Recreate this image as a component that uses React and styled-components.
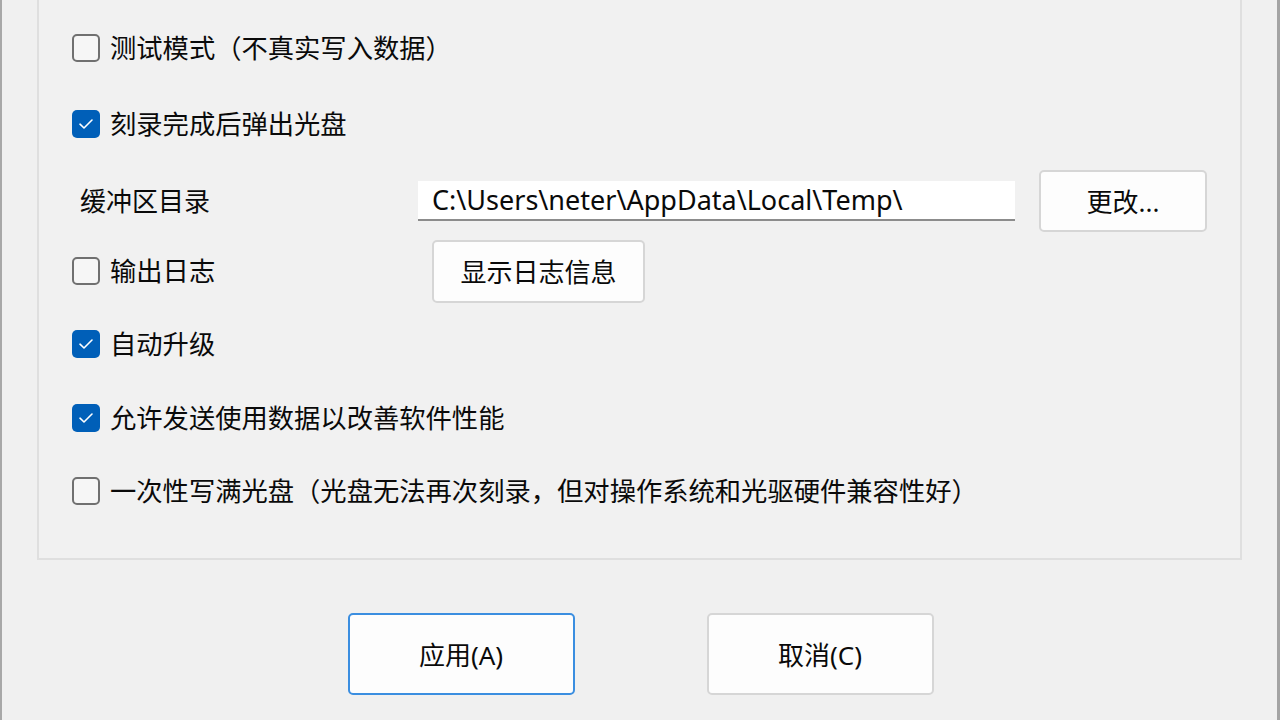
import React, { useState } from "react";
import styled, { createGlobalStyle } from "styled-components";

const GlobalStyle = createGlobalStyle`
  html, body {
    margin: 0;
    padding: 0;
    background: #f0f0f0;
  }
  body {
    font-family: "Noto Sans", "Noto Sans CJK SC", sans-serif;
    color: #0a0a0a;
  }
`;

const Window = styled.div`
  box-sizing: border-box;
  width: 1280px;
  height: 720px;
  overflow: hidden;
  background: #f0f0f0;
  border-left: 2px solid #a8a8a8;
  border-right: 3px solid #a4a4a4;
  display: flex;
  flex-direction: column;
`;

const GroupBox = styled.div`
  box-sizing: border-box;
  margin: 0 35px 0 35px;
  height: 560px;
  border: 2px solid #dfdfdf;
  border-top: none;
  background: #f1f1f1;
  padding: 11px 0 0 33px;
  display: grid;
  grid-template-columns: 346px 1fr;
  grid-template-rows: 74px 78px 76px 64px 82px 66px 80px;
`;

const Cell = styled.div`
  display: flex;
  align-items: center;
  grid-column: ${(p) => (p.$span ? "1 / span 2" : "auto")};
  padding-left: ${(p) => p.$indent || 0}px;
`;

const CheckLabel = styled.label`
  display: flex;
  align-items: center;
  gap: 10px;
  font-size: 26.3px;
  line-height: 30px;
  white-space: nowrap;
  cursor: default;
  user-select: none;
`;

const Box = styled.span`
  box-sizing: border-box;
  width: 28px;
  height: 28px;
  border-radius: 5px;
  flex: none;
  display: flex;
  align-items: center;
  justify-content: center;
  background: ${(p) => (p.$checked ? "#005fb8" : "#f6f6f6")};
  border: ${(p) => (p.$checked ? "none" : "2px solid #707070")};
`;

const Label = styled.span`
  font-size: 26px;
  line-height: 30px;
  white-space: nowrap;
`;

const PathInput = styled.input`
  box-sizing: border-box;
  width: 597px;
  height: 40px;
  border: none;
  border-bottom: 2px solid #8c8c8c;
  background: #ffffff;
  padding: 0 0 2px 14px;
  font-family: "Noto Sans", "Noto Sans CJK SC", sans-serif;
  font-size: 27px;
  color: #0a0a0a;
  outline: none;
`;

const Button = styled.button`
  box-sizing: border-box;
  width: ${(p) => p.$w}px;
  height: ${(p) => p.$h}px;
  margin-left: ${(p) => p.$ml || 0}px;
  background: #fdfdfd;
  border: 2px solid ${(p) => (p.$primary ? "#3b8ee0" : "#d6d6d6")};
  border-radius: 5px;
  font-family: "Noto Sans", "Noto Sans CJK SC", sans-serif;
  font-size: 26px;
  color: #0a0a0a;
  padding: 0;
  cursor: default;
`;

const Footer = styled.div`
  display: flex;
  justify-content: center;
  gap: 132px;
  padding-top: 53px;
  padding-left: 2px;
`;

const Check = () => (
  <svg width="16" height="12" viewBox="0 0 16 12">
    <path d="M2 6.2 L6 10 L14 2" fill="none" stroke="#fff" strokeWidth="1.6" strokeLinecap="round" strokeLinejoin="round" />
  </svg>
);

const CheckItem = ({ label, checked, onToggle }) => (
  <CheckLabel onClick={onToggle}>
    <Box $checked={checked}>{checked && <Check />}</Box>
    {label}
  </CheckLabel>
);

export default function App() {
  const [opts, setOpts] = useState({
    test: false,
    eject: true,
    log: false,
    update: true,
    stats: true,
    fill: false,
  });
  const toggle = (k) => () => setOpts({ ...opts, [k]: !opts[k] });

  return (
    <>
      <GlobalStyle />
      <Window>
        <GroupBox>
          <Cell $span>
            <CheckItem label="测试模式（不真实写入数据）" checked={opts.test} onToggle={toggle("test")} />
          </Cell>
          <Cell $span>
            <CheckItem label="刻录完成后弹出光盘" checked={opts.eject} onToggle={toggle("eject")} />
          </Cell>
          <Cell $indent={8}>
            <Label>缓冲区目录</Label>
          </Cell>
          <Cell>
            <PathInput defaultValue="C:\Users\neter\AppData\Local\Temp\" />
            <Button $w={168} $h={62} $ml={24}>更改...</Button>
          </Cell>
          <Cell>
            <CheckItem label="输出日志" checked={opts.log} onToggle={toggle("log")} />
          </Cell>
          <Cell>
            <Button $w={213} $h={63} $ml={14}>显示日志信息</Button>
          </Cell>
          <Cell $span>
            <CheckItem label="自动升级" checked={opts.update} onToggle={toggle("update")} />
          </Cell>
          <Cell $span>
            <CheckItem label="允许发送使用数据以改善软件性能" checked={opts.stats} onToggle={toggle("stats")} />
          </Cell>
          <Cell $span>
            <CheckItem
              label="一次性写满光盘（光盘无法再次刻录，但对操作系统和光驱硬件兼容性好）"
              checked={opts.fill}
              onToggle={toggle("fill")}
            />
          </Cell>
        </GroupBox>
        <Footer>
          <Button $w={227} $h={82} $primary>应用(A)</Button>
          <Button $w={227} $h={82}>取消(C)</Button>
        </Footer>
      </Window>
    </>
  );
}
